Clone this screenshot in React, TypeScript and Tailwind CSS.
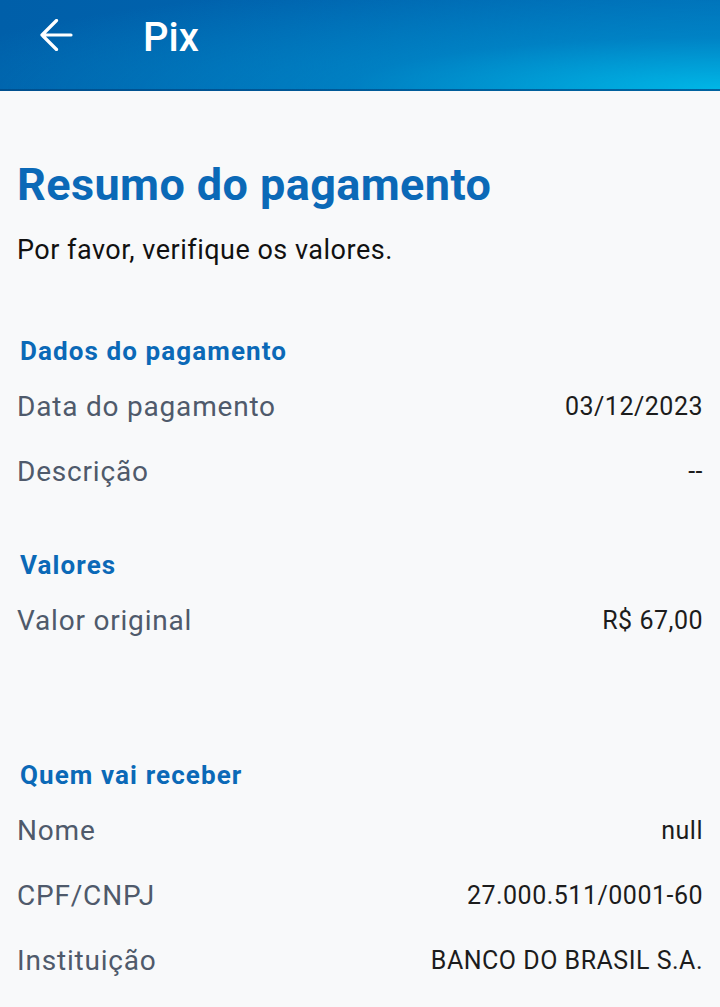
import React from 'react';

function Row({ label, value }: { label: string; value: string }) {
  return (
    <div className="flex items-center justify-between h-[65px]">
      <span className="text-[28px] tracking-[0.8px] text-[#4f5a6b]">{label}</span>
      <span className="text-[25px] tracking-[0.5px] text-[#1c1c1c]">{value}</span>
    </div>
  );
}

function Section({ title }: { title: string }) {
  return (
    <h2 className="pl-[3px] h-[46px] flex items-center text-[26px] tracking-[1.1px] font-bold text-[#0b69b7]">
      {title}
    </h2>
  );
}

export default function App() {
  return (
    <div
      className="w-[720px] h-[1007px] bg-[#f8f9fa] overflow-hidden"
      style={{ fontFamily: 'Roboto, "Liberation Sans", sans-serif' }}
    >
      <header className="h-[91px] flex items-start border-b-2 border-black/15 bg-[radial-gradient(ellipse_820px_115px_at_100%_100%,#00b6e6_0%,rgba(0,150,210,0.55)_45%,rgba(0,110,185,0)_100%),linear-gradient(90deg,#005fa9_0%,#0063ae_40%,#006bb5_100%)]">
        <svg className="ml-[40px] mt-[19px] w-[33px] h-[32px]" viewBox="0 0 33 32" fill="none" stroke="#fff" strokeWidth="3.2" strokeLinecap="round" strokeLinejoin="round">
          <path d="M2 16H31M2 16L16.5 1.5M2 16L16.5 30.5" />
        </svg>
        <span className="ml-[70px] mt-[18px] text-[40px] leading-[40px] font-medium text-white">Pix</span>
      </header>
      <main className="px-[17px]">
        <h1 className="mt-[66px] text-[45px] leading-[56px] tracking-[0.4px] font-bold text-[#0b69b7]">
          Resumo do pagamento
        </h1>
        <p className="mt-[20px] text-[27px] leading-[34px] tracking-[0.5px] text-[#111]">
          Por favor, verifique os valores.
        </p>
        <div className="mt-[61px]">
          <Section title="Dados do pagamento" />
          <Row label="Data do pagamento" value="03/12/2023" />
          <Row label="Descrição" value="--" />
        </div>
        <div className="mt-[38px]">
          <Section title="Valores" />
          <Row label="Valor original" value="R$ 67,00" />
        </div>
        <div className="mt-[99px]">
          <Section title="Quem vai receber" />
          <Row label="Nome" value="null" />
          <Row label="CPF/CNPJ" value="27.000.511/0001-60" />
          <Row label="Instituição" value="BANCO DO BRASIL S.A." />
        </div>
      </main>
    </div>
  );
}
